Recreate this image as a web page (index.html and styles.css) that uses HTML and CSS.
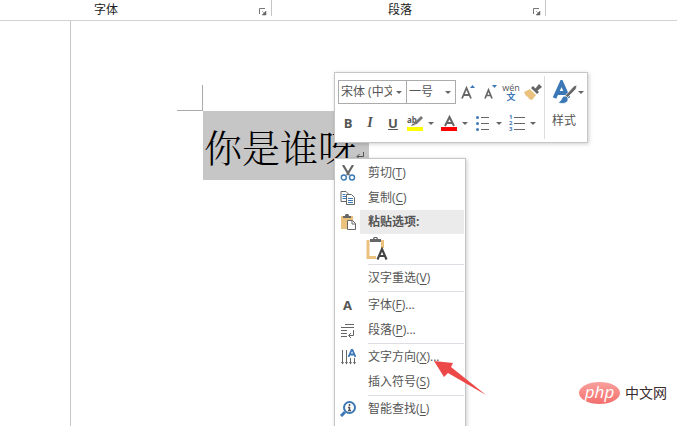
FILE: index.html
```html
<!DOCTYPE html>
<html lang="zh-CN">
<head>
<meta charset="utf-8">
<title>文档</title>
<link rel="stylesheet" href="styles.css">
</head>
<body>
<header class="ribbon">
  <div class="group group-font"><span>字体</span>
    <button class="launcher" aria-label="字体设置"><svg width="8" height="8" viewBox="0 0 8 8"><path d="M.5 6V.5H6" fill="none" stroke="#777"/><path d="M3 3l3 3M7 3v4H3z" fill="#666" stroke="#666" stroke-width=".5"/></svg></button>
  </div>
  <div class="group group-para"><span>段落</span>
    <button class="launcher" aria-label="段落设置"><svg width="8" height="8" viewBox="0 0 8 8"><path d="M.5 6V.5H6" fill="none" stroke="#777"/><path d="M3 3l3 3M7 3v4H3z" fill="#666" stroke="#666" stroke-width=".5"/></svg></button>
  </div>
</header>

<main class="workspace">
  <article class="page">
    <div class="crop"></div>
    <p class="line"><span class="selected">你是谁呀<svg class="mark" width="8" height="8" viewBox="0 0 8 8"><path d="M7.500 0v4.500H1M3.500 2L1 4.500 3.500 7" fill="none" stroke="#555"/></svg></span></p>
  </article>
</main>

<section class="toolbar" aria-label="浮动工具栏">
  <div class="tools">
    <div class="row fonts">
      <span class="combo combo-name"><select aria-label="字体"><option>宋体 (中文正文)</option></select></span>
      <span class="combo combo-size"><select aria-label="字号"><option>一号</option></select></span>
      <button class="tool" aria-label="增大字号"><svg width="16" height="18" viewBox="0 0 16 18"><path d="M3 15.500L7.500 5l4.500 10.500M4.500 12h6" fill="none" stroke="#666" stroke-width="1.800"/><path d="M11 5l2.500-3L16 5z" fill="#3b78b5"/></svg></button>
      <button class="tool" aria-label="减小字号"><svg width="16" height="18" viewBox="0 0 16 18"><path d="M4 15.500L7.500 7l3.500 8.500M5.500 12.500h4" fill="none" stroke="#666" stroke-width="1.700"/><path d="M11 2l2.500 3L16 2z" fill="#3b78b5"/></svg></button>
      <button class="tool phonetic" aria-label="拼音指南"><span>wén</span><b>文</b></button>
      <button class="tool" aria-label="格式刷"><svg width="18" height="16" viewBox="0 0 18 16"><path d="M0 8l6-3 6 6-4 5-3-1-1-2-2-1z" fill="#ebc27d"/><path d="M7 4l2-2 6 6-2 2z" fill="#666"/><path d="M11 5l4-5 3 3-5 4z" fill="#666"/><path d="M6 4.500l6.500 6" stroke="#fff"/></svg></button>
    </div>
    <div class="row formats">
      <button class="tool bold">B</button>
      <button class="tool italic">I</button>
      <button class="tool underline">U</button>
      <button class="split" aria-label="突出显示"><svg width="16" height="18" viewBox="0 0 16 18"><text x="0" y="9" class="ab">ab</text><path d="M6 11l2-3 6-6 2 2-6 6z" fill="#777"/><path d="M4 12l2-3 2 2z" fill="#777"/><path d="M0 13h16v4H0z" fill="#ff0"/></svg><i class="caret"></i></button>
      <button class="split" aria-label="字体颜色"><svg width="16" height="18" viewBox="0 0 16 18"><path d="M4 12L8.500 3l4.500 9M5.500 9h6" fill="none" stroke="#666" stroke-width="2"/><path d="M0 13h16v4H0z" fill="#f00"/></svg><i class="caret"></i></button>
      <button class="split" aria-label="项目符号"><svg width="16" height="16" viewBox="0 0 16 16"><path d="M6 2.500h8M6 8.500h8M6 14.500h8" stroke="#666"/><g fill="#3b78b5"><circle cx="2.500" cy="2.500" r="1.500"/><circle cx="2.500" cy="8.500" r="1.500"/><circle cx="2.500" cy="14.500" r="1.500"/></g></svg><i class="caret"></i></button>
      <button class="split" aria-label="编号"><span class="numbers"><span>1</span><span>2</span><span>3</span></span><i class="caret"></i></button>
    </div>
  </div>
  <button class="style"><span class="style-icon"><svg width="26" height="24" viewBox="0 0 26 24"><path d="M2.500 18L9.500 2.500 16.500 18M5 13h9" fill="none" stroke="#3b78b5" stroke-width="3.800"/><path d="M12 17L22 6l3-1-1 4-10 10z" fill="#666" stroke="#fff" stroke-width=".7"/><path d="M6 22c4 0 3-6 7-6 3 0 4 4 2 6-3 2-7 2-9 0z" fill="#3b78b5" stroke="#fff" stroke-width=".8"/></svg><i class="caret"></i></span><span>样式</span></button>
</section>

<nav class="menu" aria-label="快捷菜单">
  <button class="item"><svg width="16" height="16" viewBox="0 0 16 16"><path d="M3 0l6 10M13 0L7 10" stroke="#666" stroke-width="2.200"/><g fill="#fff" stroke="#3b78b5" stroke-width="1.400"><circle cx="3.800" cy="12.500" r="2.500"/><circle cx="12" cy="12.500" r="2.500"/></g></svg><span>剪切(<u>T</u>)</span></button>
  <button class="item"><svg width="16" height="16" viewBox="0 0 16 16"><path d="M1 1.500h5l3 3v7H1z" fill="#fff" stroke="#666"/><path d="M2.500 4.500h3M2.500 6.500h4M2.500 8.500h4" stroke="#3b78b5"/><path d="M6.500 4.500h5l3 3v7h-8z" fill="#fff" stroke="#666"/><path d="M8 8.500h5M8 10.500h5M8 12.500h5" stroke="#3b78b5"/></svg><span>复制(<u>C</u>)</span></button>
  <h2 class="item heading"><svg width="16" height="16" viewBox="0 0 16 16"><path d="M1 2h12v13H1z" fill="#ebc27d"/><path d="M3 4V2h2c0-3 4-3 4 0h2v2z" fill="#666"/><path d="M7.500 6.500h5l3 3v6h-8z" fill="#fff" stroke="#666"/><path d="M12 6.500v3.500h3.500" fill="none" stroke="#666"/></svg><span>粘贴选项:</span></h2>
  <button class="paste" aria-label="只保留文本"><svg width="22" height="24" viewBox="0 0 22 24"><path d="M2 3v17.500h8M16.500 3v8" fill="none" stroke="#ebc27d" stroke-width="3"/><path d="M4 5V2h3c0-3 5-3 5 0h3v3z" fill="#666"/><path d="M8.500 1.500h2" stroke="#fff"/><path d="M11.500 22.500L16 12l4.500 10.500M13 19h6" fill="none" stroke="#444" stroke-width="2.200"/></svg></button>
  <hr>
  <button class="item"><i></i><span>汉字重选(<u>V</u>)</span></button>
  <hr>
  <button class="item"><b>A</b><span>字体(<u>F</u>)...</span></button>
  <button class="item"><svg width="16" height="16" viewBox="0 0 16 16"><path d="M5 2.500h9M1 5.500h13M1 8.500h6M1 11.500h6M1 14.500h6M13.500 8v5.500H9M11 11l-2.500 2.500L11 16" fill="none" stroke="#666"/></svg><span>段落(<u>P</u>)...</span></button>
  <hr>
  <button class="item"><svg width="16" height="16" viewBox="0 0 16 16"><path d="M2.500 1v14M6.500 1v14M10.500 9v6M14.500 9v6" stroke="#666"/><path d="M1 13h3l-1.500 2.500zM5 13h3l-1.500 2.500zM9 13h3l-1.500 2.500zM13 13h3l-1.500 2.500z" fill="#666"/><path d="M8.500 8L12 0l3.500 8M9.500 5.500h5" fill="none" stroke="#3b78b5" stroke-width="1.800"/></svg><span>文字方向(<u>X</u>)...</span></button>
  <button class="item"><i></i><span>插入符号(<u>S</u>)</span></button>
  <hr>
  <button class="item"><svg width="16" height="16" viewBox="0 0 16 16"><circle cx="9.500" cy="6.500" r="5.500" fill="#fff" stroke="#3b78b5" stroke-width="2"/><path d="M5 11l-4 4" stroke="#3b78b5" stroke-width="3"/><path d="M9.500 3v2M8 6.500h1.500V10M8 9.500h3" fill="none" stroke="#555" stroke-width="1.500"/></svg><span>智能查找(<u>L</u>)</span></button>
</nav>

<svg class="pointer" width="54" height="36" viewBox="0 0 54 36"><path d="M0 0l19 2-2 4 35 28-38-22-4 4z" fill="#ed4848"/></svg>

<footer class="brand"><span class="badge">php</span><span>中文网</span></footer>
</body>
</html>
```

FILE: styles.css
```css
* { box-sizing: border-box; }
html, body { height: 100%; margin: 0; overflow: hidden; }
body {
  display: flex;
  flex-direction: column;
  position: relative;
  background: #fff;
  color: #555;
  font: 12px/16px "Open Sans", "Noto Sans CJK SC", sans-serif;
}
button {
  padding: 0;
  border: 0;
  background: none;
  color: inherit;
  font: inherit;
}
svg { display: block; flex: none; }

.ribbon { display: flex; height: 21px; border-bottom: 1px solid #d2d2d2; }
.group {
  position: relative;
  height: 16px;
  border-right: 1px solid #c6c6c6;
  color: #222;
  line-height: 20px;
}
.group-font { width: 272px; padding-left: 94px; }
.group-para { width: 274px; padding-left: 116px; }
.launcher { position: absolute; right: 4px; bottom: 0; height: 8px; }

.workspace { flex: 1; padding-left: 70px; }
.page { height: 100%; padding: 64px 0 0 106px; border-left: 1px solid #c6c6c6; }
.crop {
  width: 26px;
  height: 26px;
  border-right: 1px solid #aaa;
  border-bottom: 1px solid #aaa;
}
.line { margin: 0 0 0 26px; }
.selected {
  display: inline-flex;
  align-items: center;
  height: 69px;
  padding: 0 5px 0 1px;
  background: #c6c6c6;
  color: #000;
  font: 300 38px/64px "Noto Serif CJK SC", "Noto Sans CJK SC", serif;
}
.mark { margin-top: 20px; }

.toolbar {
  position: absolute;
  top: 72px;
  left: 334px;
  display: flex;
  padding: 3px;
  border: 1px solid #c6c6c6;
  background: #fff;
  box-shadow: 1px 1px 4px #0003;
}
.tools { padding: 4px 0 6px; border-right: 1px solid #dcdcdc; }
.row { display: flex; align-items: center; }
.fonts { height: 24px; margin-bottom: 9px; }
.formats { height: 20px; }
.combo { position: relative; height: 24px; border: 1px solid #ababab; }
.combo-name { width: 69px; margin-right: -1px; }
.combo-size { width: 50px; }
.combo select {
  display: block;
  width: 100%;
  height: 22px;
  padding: 0 14px 0 2px;
  border: 0;
  appearance: none;
  background: none;
  color: #555;
  font: inherit;
}
.combo::after, .caret {
  width: 0;
  border: 3px solid transparent;
  border-top-color: #666;
  border-bottom: 0;
}
.combo::after { content: ""; position: absolute; right: 4px; top: 10px; pointer-events: none; }
.tool { display: flex; align-items: center; justify-content: center; width: 22px; height: 22px; }
.phonetic { flex-direction: column; font-size: 9px; line-height: 9px; }
.phonetic b { color: #3b78b5; }
.bold, .italic, .underline { font-size: 13px; font-weight: 700; }
.bold { width: 20px; }
.italic { width: 24px; font-family: "Liberation Serif", serif; font-style: italic; font-size: 14px; }
.underline { text-decoration: underline; }
.split { display: flex; align-items: center; gap: 5px; width: 34px; height: 20px; padding-left: 3px; }
.ab { font: 700 8px "Open Sans", sans-serif; fill: #555; }
.numbers {
  display: grid;
  width: 16px;
  color: #3b78b5;
  font-size: 6px;
  font-weight: 700;
  line-height: 6px;
}
.numbers span { display: flex; align-items: center; gap: 2px; }
.numbers span::after { content: ""; flex: 1; height: 1px; background: #666; }
.style { display: flex; flex-direction: column; gap: 8px; padding: 4px 0 0 7px; line-height: 18px; text-align: left; }
.style-icon { display: flex; align-items: center; width: 32px; }

.menu {
  position: absolute;
  top: 158px;
  left: 334px;
  width: 132px;
  padding: 1px 1px 12px 0;
  border: 1px solid #c6c6c6;
  background: #fff;
  box-shadow: 1px 1px 4px #0003;
}
.item {
  display: grid;
  grid-template-columns: 25px 1fr;
  align-items: center;
  width: 100%;
  height: 25px;
  text-align: left;
}
.item > :first-child { justify-self: center; }
.item > span { padding: 1px 0 0 8px; white-space: nowrap; }
.item > b { font-size: 13px; }
.item u { text-underline-offset: 2px; }
.heading { height: 24px; margin: 0; font-size: 12px; font-weight: 700; }
.heading > span { height: 24px; background: #ebebeb; line-height: 22px; }
.paste { display: block; height: 29px; margin-left: 31px; }
.menu hr { height: 1px; margin: 1px 0 0 33px; border: 0; background: #dcdfe3; }

.pointer { position: absolute; top: 361px; left: 434px; }

.brand {
  position: absolute;
  right: 10px;
  bottom: 22px;
  display: flex;
  align-items: center;
  gap: 5px;
  color: #3a2c2c;
  font-size: 14px;
  line-height: 22px;
}
.badge {
  width: 41px;
  height: 22px;
  border-radius: 50%;
  background: linear-gradient(#f9a09c, #f36f6d);
  color: #fff;
  font: italic 17px/19px "Open Sans", sans-serif;
  text-align: center;
}
```
